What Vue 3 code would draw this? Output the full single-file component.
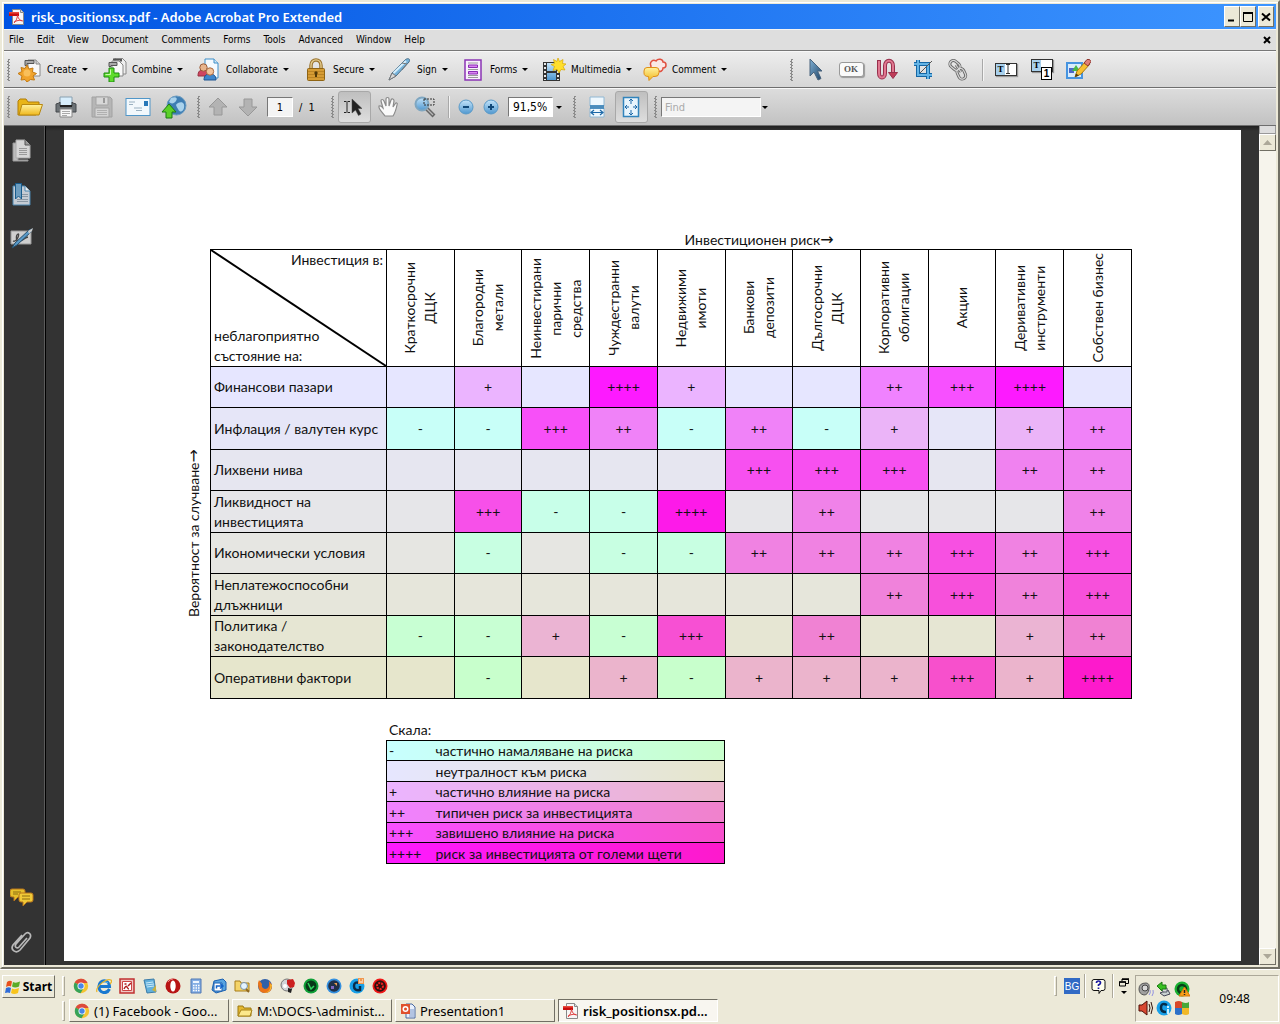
<script setup>
const menus = ['File', 'Edit', 'View', 'Document', 'Comments', 'Forms', 'Tools', 'Advanced', 'Window', 'Help']

const tasks = [
  { icon: 'create', label: 'Create' },
  { icon: 'combine', label: 'Combine' },
  { icon: 'collaborate', label: 'Collaborate' },
  { icon: 'secure', label: 'Secure' },
  { icon: 'sign', label: 'Sign' },
  { icon: 'forms', label: 'Forms' },
  { icon: 'multimedia', label: 'Multimedia' },
  { icon: 'comment', label: 'Comment' }
]

const editTools = [
  ['select', 'Select object'], ['ok', 'Button tool'], ['article', 'Article'], ['crop', 'Crop'], ['link', 'Link']
]
const textTools = [['touchup', 'Text field'], ['order', 'Reading order'], ['object', 'Edit object']]
const fileTools = [['open', 'Open'], ['print', 'Print'], ['save', 'Save'], ['mail', 'E-mail'], ['upload', 'Upload']]

const columns = [
  ['Краткосрочни', 'ДЦК'],
  ['Благородни', 'метали'],
  ['Неинвестирани', 'парични', 'средства'],
  ['Чуждестранни', 'валути'],
  ['Недвижими', 'имоти'],
  ['Банкови', 'депозити'],
  ['Дългосрочни', 'ДЦК'],
  ['Корпоративни', 'облигации'],
  ['Акции'],
  ['Деривативни', 'инструменти'],
  ['Собствен бизнес']
]

const N = '-'
const rows = [
  { label: ['Финансови пазари'], cells: [0, 1, 0, 4, 1, 0, 0, 2, 3, 4, 0] },
  { label: ['Инфлация / валутен курс'], cells: [N, N, 3, 2, N, 2, N, 1, 0, 1, 2] },
  { label: ['Лихвени нива'], cells: [0, 0, 0, 0, 0, 3, 3, 3, 0, 2, 2] },
  { label: ['Ликвидност на', 'инвестицията'], cells: [0, 3, N, N, 4, 0, 2, 0, 0, 0, 2] },
  { label: ['Икономически условия'], cells: [0, N, 0, N, N, 2, 2, 2, 3, 2, 3] },
  { label: ['Неплатежоспособни', 'длъжници'], cells: [0, 0, 0, 0, 0, 0, 0, 2, 3, 2, 3] },
  { label: ['Политика /', 'законодателство'], cells: [N, N, 1, N, 3, 0, 2, 0, 0, 1, 2] },
  { label: ['Оперативни фактори'], cells: [0, N, 0, 1, N, 1, 1, 1, 3, 1, 4] }
]

const base = {
  '-': [200, 255],
  0: [230, 230],
  1: [235, 180],
  2: [240, 130],
  3: [247, 80],
  4: [253, 26]
}
const shade = (level, t) => {
  const [r, g] = base[level]
  return `rgb(${r}, ${g}, ${Math.round(255 - 51 * t)})`
}
const mark = (level) => (level === N ? '-' : '+'.repeat(level))

const legend = [
  [N, 'частично намаляване на риска'],
  [0, 'неутралност към риска'],
  [1, 'частично влияние на риска'],
  [2, 'типичен риск за инвестицията'],
  [3, 'завишено влияние на риска'],
  [4, 'риск за инвестицията от големи щети']
]

const quick = ['chrome', 'ie', 'redapp', 'notepad', 'opera', 'calc', 'outlook', 'search', 'firefox', 'disc', 'green', 'camera', 'swirl', 'gear']
const windows = [
  { icon: 'chrome', label: '(1) Facebook - Goo...' },
  { icon: 'folder', label: 'M:\\DOCS-\\administ...' },
  { icon: 'ppt', label: 'Presentation1' },
  { icon: 'pdf', label: 'risk_positionsx.pd...', active: true }
]
const tray = ['volume', 'usb', 'shield', 'speaker', 'info', 'pinwheel']
</script>

<template>
  <svg class="sprite" aria-hidden="true">
    <defs>
      <linearGradient id="gGold" x1="0" y1="0" x2="0" y2="1"><stop offset="0" stop-color="#fff2a0" /><stop offset="1" stop-color="#f0b81c" /></linearGradient>
      <linearGradient id="gBlue" x1="0" y1="0" x2="0" y2="1"><stop offset="0" stop-color="#c4e4fa" /><stop offset="1" stop-color="#4f97cf" /></linearGradient>
      <linearGradient id="gSteel" x1="0" y1="0" x2="1" y2="1"><stop offset="0" stop-color="#7fb0d4" /><stop offset="1" stop-color="#1f4468" /></linearGradient>
    </defs>

    <symbol id="pdf" viewBox="0 0 16 16">
      <path d="M3.500.500h8l3 3v12h-11z" fill="#f6f6f6" stroke="#888" /><path d="M11.500.500v3h3" fill="#ddd" stroke="#888" />
      <path d="M0 3h10v4H0z" fill="#c90d0d" /><path d="M0 3h10v1.500H0z" fill="#e84a3c" />
      <path d="M5 14c2-2 3-4 3.500-7.500C9.500 10 11 12 14 12M5 13c3-1.500 5-2 8-1.500" fill="none" stroke="#e04040" />
    </symbol>
    <symbol id="create" viewBox="0 0 24 24">
      <path d="M10 2h8l4 4v12H10z" fill="#f8f8f8" stroke="#888" /><path d="M18 2v4h4" fill="#d4d4d4" stroke="#888" />
      <path d="M7 2.500h9v3H9v2H7z" fill="#aaa" stroke="#555" />
      <path d="M9 7l2 4 4-1-.500 4 4 1.500-3.500 2.500 1.500 4-4-.500L9 24l-2-2.500-4 .500 1-4-4-2.500 4-2-1-4 4 1z" fill="#f0a32c" stroke="#c47a12" />
      <circle cx="9" cy="15" r="3.500" fill="#ffd27a" opacity=".6" />
    </symbol>
    <symbol id="combine" viewBox="0 0 24 24">
      <path d="M12 0h7l4 4v12H12z" fill="#eee" stroke="#888" /><path d="M9 3h7l4 4v11H9z" fill="#f8f8f8" stroke="#888" /><path d="M6 4.500h8v3H8v1H6z" fill="#aaa" stroke="#555" /><path d="M10 1.500h8v2" fill="none" stroke="#555" stroke-width="2" />
      <path d="M6 10h5v5h5v4h-5v5H6v-5H1v-4h5z" fill="#5fdc2c" stroke="#1d8a10" />
      <path d="M7.500 11.500v5H2.500" fill="none" stroke="#c9f8b0" />
    </symbol>
    <symbol id="collaborate" viewBox="0 0 24 24">
      <path d="M8 1h9l4 4v15H8z" fill="#f4faff" stroke="#3c8ec8" /><path d="M17 1v4h4" fill="#cfe6f6" stroke="#3c8ec8" />
      <path d="M1 18c0-5 2-6 5-6s5 1 5 6z" fill="#cf4560" stroke="#963040" /><circle cx="6.500" cy="9.500" r="3.700" fill="#e8b48c" stroke="#9a5c3a" />
      <path d="M7 22c0-5 3-6 6-6s6 1 6 6z" fill="#3e86cc" stroke="#1f5590" /><circle cx="13" cy="13.500" r="3.700" fill="#f2c49c" stroke="#a86840" />
    </symbol>
    <symbol id="secure" viewBox="0 0 24 24">
      <path d="M7 12V7.500C7 0 17 0 17 7.500V12" fill="none" stroke="#9a7430" stroke-width="3.500" /><path d="M7 12V7.500C7 0 17 0 17 7.500V12" fill="none" stroke="#e8cf90" stroke-width="1.300" />
      <rect x="3.500" y="10.500" width="17" height="12" rx="1" fill="#d69c34" stroke="#8f6414" /><path d="M4 13.500h16M4 16.500h16M4 19.500h16" stroke="#bb8424" />
      <circle cx="12" cy="15" r="1.700" fill="#503808" /><path d="M12 15v4" stroke="#503808" stroke-width="2" />
    </symbol>
    <symbol id="sign" viewBox="0 0 24 24">
      <path d="M1 22l3-7L17 2c2-2 6-2 4 2L8 18z" fill="#77b3da" stroke="#4b6f88" /><path d="M1 22l3-7 4 3z" fill="#d8d8d8" stroke="#777" /><path d="M5.500 15L18 3" stroke="#d6eefb" stroke-width="2" /><path d="M14 5l5 1-5 6" fill="none" stroke="#777" />
    </symbol>
    <symbol id="forms" viewBox="0 0 24 24">
      <rect x="4" y="2" width="16" height="20" fill="#f8f0fc" stroke="#8a35b4" stroke-width="1.500" />
      <path d="M7 5h10M7 11.500h10M7 17.500h10M7 19.500h10" stroke="#9a9a9a" /><path d="M7.500 7h9v2.500h-9zM7.500 13.500h9V16h-9z" fill="#d884f0" stroke="#8a2ab4" />
    </symbol>
    <symbol id="multimedia" viewBox="0 0 24 24">
      <rect x="1" y="4" width="17" height="19" fill="#333" /><path d="M5 5h9v8H5zM5 15h9v7H5z" fill="url(#gBlue)" />
      <path d="M3 5v17M16 5v17" stroke="#e8e8e8" stroke-width="2" stroke-dasharray="2 2" />
      <path d="M16 0l1.500 3.500L21 1.500l-.500 4 3.500.500-3 2.500 2 3.500-4-.500L17 15l-2-3.500-4 1 1.500-4L9 6.500l3.500-1-1-4 3.500 2z" fill="#ffdf2c" stroke="#d8a800" stroke-width=".7" />
    </symbol>
    <symbol id="comment" viewBox="0 0 24 24">
      <path d="M8 8c-2-4 2-7 5-5 2-3 7-2 7 1 4 0 4 6 0 6 0 3-3 4-4 3l-2 4-2-5c-3 1-5-1-4-4z" fill="#fae8e6" stroke="#e05040" stroke-width="1.500" />
      <path d="M4 9.500h9q3 0 3 3v2q0 4-4 4h-2l-4 4-.500-4Q1 18.500 1 15v-2q0-3.500 3-3.500z" fill="url(#gGold)" stroke="#e09018" />
    </symbol>
    <symbol id="select" viewBox="0 0 24 24"><path d="M7 1v17l4-4 4 8 3-1.500-3.500-7.500H19z" fill="url(#gSteel)" stroke="#49637c" /></symbol>
    <symbol id="article" viewBox="0 0 24 24">
      <path d="M4 2v13c0 6 6 6 6 0V8c0-7 8-7 8 0v6" fill="none" stroke="#98304c" stroke-width="4" /><path d="M4 3v12c0 6 6 6 6 0V8c0-7 8-7 8 0v6" fill="none" stroke="#e07890" stroke-width="2" />
      <path d="M13.500 14.500h9L18 20.500z" fill="#c03c58" stroke="#98304c" />
    </symbol>
    <symbol id="crop" viewBox="0 0 24 24">
      <path d="M7 2v15h14M3 6h14v15" fill="none" stroke="#1667a4" stroke-width="4" /><path d="M7 2v15h14M3 6h14v15" fill="none" stroke="#64b4e6" stroke-width="2" /><path d="M9 15L21 3" stroke="#555" />
    </symbol>
    <symbol id="link" viewBox="0 0 24 24">
      <g fill="none" stroke="#686868" stroke-width="3"><rect x="5" y="2" width="7" height="11" rx="3.500" transform="rotate(-50 8 8)" /><rect x="11" y="10" width="7" height="11" rx="3.500" transform="rotate(-25 15 16)" /><path d="M9 7l5 7" /></g>
      <g fill="none" stroke="#d8d8d8" stroke-width="1.200"><rect x="5" y="2" width="7" height="11" rx="3.500" transform="rotate(-50 8 8)" /><rect x="11" y="10" width="7" height="11" rx="3.500" transform="rotate(-25 15 16)" /><path d="M9 7l5 7" /></g>
    </symbol>
    <symbol id="object" viewBox="0 0 26 24">
      <path d="M2 5h15v15H2z" fill="#d8ecfc" stroke="#4694e0" stroke-width="2" /><path d="M4 10h5v5H4z" fill="#4c68c8" /><path d="M7 13l4-6 4 6z" fill="#48b848" />
      <path d="M10 19l2-6L21 3l4 3-9 10z" fill="#f8c030" stroke="#a87810" /><path d="M19 5l3-3.500q3-1 4 2L23 8z" fill="#e08078" stroke="#903830" /><path d="M10 19l1-3.500 3 2z" fill="#543c10" />
    </symbol>
    <symbol id="open" viewBox="0 0 26 24">
      <path d="M1 20V6l2-2h6l2 3h11v3l-3 10z" fill="#e8b418" stroke="#b07c08" /><path d="M2 20L5 9.500h20.500L22 20z" fill="url(#gGold)" stroke="#b88810" />
    </symbol>
    <symbol id="print" viewBox="0 0 24 24">
      <path d="M6 2h12v9H6z" fill="#d8eefc" stroke="#89a0b0" /><path d="M2 9q4-1 4-2v4h12V7q0 1 4 2v8H2z" fill="#6c7276" stroke="#44484c" /><path d="M6 11h12" stroke="#222" stroke-width="2" />
      <path d="M6 14h12v8H6z" fill="#f8f8f8" stroke="#888" /><path d="M8 16.500h8M8 18.500h8M8 20.500h5" stroke="#aaa" />
    </symbol>
    <symbol id="save" viewBox="0 0 24 24">
      <path d="M2 2h18l2 2v18H2z" fill="#b6b6b6" stroke="#a2a2a2" /><path d="M6 2h12v8H6z" fill="#d8d8d8" stroke="#a4a4a4" /><path d="M14 3v5" stroke="#999" stroke-width="2" /><path d="M5 13h14v9H5z" fill="#d4d4d4" stroke="#a4a4a4" /><path d="M7 15.500h10M7 17.500h10M7 19.500h10" stroke="#b0b0b0" />
    </symbol>
    <symbol id="mail" viewBox="0 0 26 24">
      <rect x="1" y="3.500" width="24" height="17" fill="#f2f8fc" stroke="#5096c8" /><path d="M19 6h4v5h-4z" fill="#2878b8" /><path d="M4 7h6M4 9.500h4M9 13h8M11 15.500h6" stroke="#9ab0c0" />
    </symbol>
    <symbol id="upload" viewBox="0 0 26 24">
      <circle cx="15.500" cy="10.500" r="9.500" fill="#3f7eb4" stroke="#6c9cc0" /><path d="M10 3c5-2 7 0 5 3s-5 3-7 1zM17 8c5-2 7 1 6 5s-4 5-6 1-3-4 0-6z" fill="#a9d2ec" />
      <path d="M8 9l7 8h-4v6H5v-6H1z" fill="#5cd028" stroke="#1b7c10" />
    </symbol>
    <symbol id="up" viewBox="0 0 20 20"><path d="M10 1l9 9h-5v8H6v-8H1z" fill="#b3b3b3" stroke="#989898" /></symbol>
    <symbol id="down" viewBox="0 0 20 20"><path d="M10 19l9-9h-5V2H6v8H1z" fill="#b3b3b3" stroke="#989898" /></symbol>
    <symbol id="textsel" viewBox="0 0 24 24"><path d="M2 6.500h2.500M5.500 6.500H8M5 7v10M2 17.500h2.500M5.500 17.500H8" stroke="#222" stroke-width="1" /><path d="M10 4v14l3.500-3 3 5.500 2.500-1.500-3-5.500h4z" fill="#222" stroke="#444" stroke-width=".5" /></symbol>
    <symbol id="hand" viewBox="0 0 24 24"><path d="M8 21C6 18 1 14 2 11c2-1 3 1 4 2L4 6c0-2 2-2 3 0l2 5V4c0-2 3-2 3 0v7l2-6c1-2 3-1 3 1l-1 6 2-3c1-2 3-1 2 1-1 5-2 8-4 11z" fill="#fafafa" stroke="#8a8a8a" stroke-width="1.200" /></symbol>
    <symbol id="loupe" viewBox="0 0 24 24"><path d="M13 13l8 8" stroke="#666" stroke-width="4" /><path d="M14 14l6 6" stroke="#b8b8b8" stroke-width="1.200" /><circle cx="9" cy="9" r="6.500" fill="url(#gBlue)" stroke="#7fa6c0" stroke-width="2" /><path d="M11 4h10v6H11z" fill="none" stroke="#333" stroke-dasharray="2 1" /></symbol>
    <symbol id="minus" viewBox="0 0 16 16"><circle cx="8" cy="8" r="7" fill="url(#gBlue)" stroke="#5a9ac8" /><path d="M5 8h6" stroke="#104878" stroke-width="2" /></symbol>
    <symbol id="plus" viewBox="0 0 16 16"><circle cx="8" cy="8" r="7" fill="url(#gBlue)" stroke="#5a9ac8" /><path d="M5 8h6M8 5v6" stroke="#104878" stroke-width="2" /></symbol>
    <symbol id="fitw" viewBox="0 0 20 24"><path d="M3 2h14v9H3zM3 13h14v9H3z" fill="#eef7fd" stroke="#90b8d4" /><path d="M3 11h14M3 13h14" stroke="#2b7ab4" stroke-width="1.500" /><path d="M4 17.500h12M7 15l-3 2.500L7 20M13 15l3 2.500-3 2.500" fill="none" stroke="#1c68a8" stroke-width="1.200" /></symbol>
    <symbol id="fitp" viewBox="0 0 20 24"><path d="M2.500 2.500h15v19h-15z" fill="#e8f4fc" stroke="#3284bc" stroke-width="1.500" /><path d="M10 4v5M10 15v5M4 12h4M12 12h4M8 6l2-2 2 2M8 18l2 2 2-2M6 10l-2 2 2 2M14 10l2 2-2 2" fill="none" stroke="#1c68a8" /></symbol>
    <symbol id="pages" viewBox="0 0 24 24"><path d="M3 4h5v17h10v1H3z" fill="#bbb" stroke="#999" /><path d="M6 1h9l5 5v13H6z" fill="#d6d6d6" stroke="#aaa" /><path d="M15 1v5h5" fill="#999" stroke="#555" /><path d="M9 9.500h8M9 11.500h8M9 13.500h8M9 15.500h8" stroke="#999" /></symbol>
    <symbol id="bookmarks" viewBox="0 0 24 24"><path d="M3 3h12l5 5v14H3z" fill="#c5ccd4" stroke="#4a86b0" /><path d="M15 3v5h5" fill="#eee" stroke="#4a86b0" /><path d="M12 11.500h6M12 13.500h6M7 16.500h11M7 18.500h11" stroke="#8a98a4" /><path d="M5.500.500h6V16l-3-3-3 3z" fill="#6d9dbf" stroke="#185c8c" /></symbol>
    <symbol id="signatures" viewBox="0 0 24 24"><path d="M1 4h20v13H1z" fill="#cfcfcf" stroke="#999" /><path d="M3 14c4 2 7-8 5-7s-3 8 2 7 3-3 8-4" fill="none" stroke="#444" stroke-width="1.300" /><path d="M2 21l3-5L19 3l3-1-1 3L7 18z" fill="#5a9ac8" stroke="#26506e" /><path d="M18 4l5-3-1 3-3 3z" fill="#ccc" /></symbol>
    <symbol id="comments" viewBox="0 0 24 24"><path d="M2 2h11q2 0 2 2v4q0 2-2 2H8l-4 4v-4H2q-2 0-2-2V4q0-2 2-2z" fill="#e6c02c" stroke="#b8741a" /><path d="M3 5h8M3 7h5" stroke="#8c6c10" /><path d="M11 6h10q2 0 2 2v5q0 2-2 2h-4l-4 4v-4h-2q-2 0-2-2V8q0-2 2-2z" fill="#f0ca38" stroke="#b8741a" /><path d="M12 9h8M12 12h8" stroke="#8c6c10" /></symbol>
    <symbol id="clip" viewBox="0 0 24 24"><path d="M17 7l-8 9c-2 2-5 0-3-3l9-10c3-3 7 0 5 4L10 19c-4 4-10 0-7-5L12 4" fill="none" stroke="#b8b8b8" stroke-width="1.700" /></symbol>

    <symbol id="flag" viewBox="0 0 16 16"><path d="M2 3q3-2 5-.500L6 7.500Q4 6.500 1 8z" fill="#e8501c" /><path d="M8 3q3 1.500 7-.500L14 7.500q-4 2-7 0z" fill="#5cac28" /><path d="M1 9q3-1.500 5 0l-1 5Q3 13 0 14z" fill="#2f6cd8" /><path d="M7 9.500q3 1.500 7-.500l-1 5q-4 2-7 0z" fill="#f8c41c" /></symbol>
    <symbol id="chrome" viewBox="0 0 16 16"><circle cx="8" cy="8" r="7.200" fill="#f4c430" /><path d="M8 8L1.700 4.500A7.200 7.200 0 0 1 14.600 5H8z" fill="#dd4a3c" /><path d="M8 8L1.700 4.500A7.200 7.200 0 0 0 7.500 15.200L11 9.500z" fill="#36a35a" /><circle cx="8" cy="8" r="3.500" fill="#fff" /><circle cx="8" cy="8" r="2.700" fill="#4786e8" /></symbol>
    <symbol id="ie" viewBox="0 0 16 16"><path d="M13.500 11c-3 6-11 4-10.500-3s10-7 10.500.500H4" fill="none" stroke="#1878d0" stroke-width="3" /><path d="M5 6q3-4 7-1" fill="none" stroke="#60c0f8" /><path d="M1 14C-1 9 10 0 15 2c1 1 0 3-1 4" fill="none" stroke="#e8b428" stroke-width="1.200" /></symbol>
    <symbol id="redapp" viewBox="0 0 16 16"><path d="M1 1h14v14H1z" fill="#f0c8c4" stroke="#c03030" stroke-width="1.500" /><path d="M3.500 3.500h9v9h-9z" fill="#fff" stroke="#c44" /><path d="M5 11q2-4 3-2t2 2M5.500 6h2M9 8l3-3" stroke="#b02020" stroke-width="1.500" fill="none" /></symbol>
    <symbol id="notepad" viewBox="0 0 16 16"><path d="M2 2l10-1 2 13-9 1z" fill="#62b0dc" stroke="#3c7ca8" /><path d="M4 5l7-1M4 7l8-1M5 9l7-1" stroke="#c8e8f8" /><path d="M10 12l4-5v7z" fill="#c8b040" /></symbol>
    <symbol id="opera" viewBox="0 0 16 16"><circle cx="8" cy="8" r="7.500" fill="#b81414" /><ellipse cx="8" cy="8" rx="2.700" ry="5.500" fill="#fff" /><path d="M3 4q2-3 5-3" stroke="#f08080" fill="none" /></symbol>
    <symbol id="calc" viewBox="0 0 16 16"><path d="M3 1h10v14H3z" fill="#84aee4" stroke="#5078b4" /><path d="M5 3h6v2H5z" fill="#eef6ff" /><path d="M5 7.500h7M5 10h7M5 12.500h7" stroke="#fff" stroke-width="1.500" stroke-dasharray="1.500 1" /></symbol>
    <symbol id="outlook" viewBox="0 0 16 16"><path d="M3 3l9-2 3 3v8l-10 3-4-3z" fill="#58a4e0" stroke="#1c60b0" /><path d="M3 5h8v8H3z" fill="#fff" stroke="#1c60b0" /><path d="M5.500 10.500V8H11M9 5.500L12 8l-3 2.500" fill="none" stroke="#1464c8" stroke-width="1.500" /></symbol>
    <symbol id="search" viewBox="0 0 16 16"><path d="M1 13V3h5l1 2h8v8z" fill="#f4d468" stroke="#a87c18" /><circle cx="10" cy="8" r="3.500" fill="#e4f4ff" stroke="#7890a8" /><path d="M12 11l3 3" stroke="#906820" stroke-width="2" /></symbol>
    <symbol id="folder" viewBox="0 0 16 16"><path d="M1 13V3h5l1 2h7v8z" fill="#e4b830" stroke="#9c7810" /><path d="M1 13l3-6h11l-2 6z" fill="#fce98c" stroke="#a88418" /></symbol>
    <symbol id="firefox" viewBox="0 0 16 16"><circle cx="8" cy="8" r="7" fill="#3060a8" /><path d="M1 5q0 10 7 10t7-8l-3-4q1 8-4 8-4-1-3-5L2 2z" fill="#ec7418" /><path d="M15 7q-1 8-8 8 8-2 6-9z" fill="#f8c030" /></symbol>
    <symbol id="disc" viewBox="0 0 16 16"><circle cx="7" cy="7" r="6" fill="#d0d4d8" stroke="#777" /><path d="M7 2l6-1 2 4-1 4-4 1-3-4z" fill="#cc2020" /><path d="M8 10l4 1-1 4-3-1z" fill="#222" /><circle cx="5" cy="8" r="2" fill="#fff" /></symbol>
    <symbol id="green" viewBox="0 0 16 16"><circle cx="8" cy="8" r="7.500" fill="#10a038" /><circle cx="8" cy="8" r="5.500" fill="#083818" /><path d="M5 5l3 6 3-3" fill="none" stroke="#30d860" stroke-width="1.500" /></symbol>
    <symbol id="camera" viewBox="0 0 16 16"><circle cx="8" cy="8" r="7.500" fill="#3490e0" /><circle cx="8" cy="8" r="5.800" fill="#203048" /><path d="M8 5h3v3z" fill="#f0a050" /><path d="M5 8h3v3H5z" fill="#8068c0" /></symbol>
    <symbol id="swirl" viewBox="0 0 16 16"><circle cx="8" cy="8" r="7.500" fill="#18a0e8" /><path d="M11 5q-6-2-6 3t6 4V8" fill="none" stroke="#0b2c48" stroke-width="2.500" /><path d="M9 0h6v6H9z" fill="#f09850" /><path d="M10 2h1M13 2h1M10 4h4" stroke="#fff" /></symbol>
    <symbol id="gear" viewBox="0 0 16 16"><circle cx="8" cy="8" r="7.500" fill="#f01818" /><circle cx="8" cy="8" r="5.800" fill="#301010" /><circle cx="8" cy="8" r="3" fill="none" stroke="#f02020" stroke-width="2" stroke-dasharray="2 1" /></symbol>
    <symbol id="ppt" viewBox="0 0 16 16"><path d="M6 1h6l3 3v11H6z" fill="#e8f0fc" stroke="#4868a0" /><path d="M9 7h5M9 9h5M9 11h5M9 13h5" stroke="#7c98c8" /><path d="M1 1h9v10H1z" fill="#e0502c" /><circle cx="5.500" cy="6" r="3" fill="#fff" /><circle cx="5.500" cy="6" r="1.500" fill="#e0502c" /></symbol>
    <symbol id="help" viewBox="0 0 16 16"><path d="M3 1.500h9q2 0 2 2v7q0 2-2 2h-2l-2 3v-3H3q-2 0-2-2v-7q0-2 2-2z" fill="#fffff0" stroke="#111" /><path d="M5.500 5q0-2 2-2t2 2q0 1-2 2v1M7.500 9.500V11" fill="none" stroke="#1818a0" stroke-width="1.700" /></symbol>
    <symbol id="restore" viewBox="0 0 10 9"><path d="M3 1.500h6.500v4H7M3 1v2M.500 4h6v4h-6z" fill="none" stroke="#000" /><path d="M3 1h7M0 4h7" stroke="#000" stroke-width="1.500" /></symbol>
    <symbol id="volume" viewBox="0 0 16 16"><path d="M1 8q0-6 7-6 4 0 3 6t-5 6Q1 13 1 8z" fill="#a0a0a0" stroke="#555" /><circle cx="7" cy="7" r="3" fill="#d8d8d8" stroke="#444" /><path d="M11 14q2-2 1-5M14 15q2-3 1-6" fill="none" stroke="#9090e0" /></symbol>
    <symbol id="usb" viewBox="0 0 16 16"><path d="M4 12l8-3 2 4-6 2z" fill="#c8d0d0" stroke="#445" /><path d="M5 7h6v4H7z" fill="#d8dcdc" stroke="#556" /><path d="M1 5l5-4v3h4v4H6v2z" fill="#38c020" stroke="#187810" /></symbol>
    <symbol id="shield" viewBox="0 0 16 16"><circle cx="8" cy="8" r="7.500" fill="#18b030" /><circle cx="8" cy="8" r="4" fill="none" stroke="#084018" stroke-width="2.500" /><path d="M10.500 6L16 15H5z" fill="#f8a018" stroke="#d87808" /><path d="M10.500 9v3M10.500 13v1" stroke="#222" stroke-width="1.500" /></symbol>
    <symbol id="speaker" viewBox="0 0 16 16"><path d="M1 5h3l5-4v14l-5-4H1z" fill="#d84830" stroke="#501008" /><path d="M11 4q2 4 0 8M13 2q3 6 0 12" fill="none" stroke="#301008" /></symbol>
    <symbol id="info" viewBox="0 0 16 16"><circle cx="8" cy="8" r="7.500" fill="#18a0e8" /><path d="M11 5q-6-3-6 3 0 4 5 4" fill="none" stroke="#062c48" stroke-width="2.500" /><path d="M12 9v5M12 6v2" stroke="#c8f0ff" stroke-width="2" /></symbol>
    <symbol id="pinwheel" viewBox="0 0 16 16"><path d="M1 2q4-2 7 0v6H1z" fill="#d84828" /><path d="M8 2q4 2 7 0v6H8z" fill="#48a838" /><path d="M1 8h7v6q-4 2-7 0z" fill="#2c70c8" /><path d="M8 8h7v6q-3 2-7 0z" fill="#f0b828" /></symbol>
  </svg>

  <div class="desktop">
    <div class="window">
      <header class="title">
        <svg class="i16"><use href="#pdf" /></svg>
        <h1>risk_positionsx.pdf - Adobe Acrobat Pro Extended</h1>
        <div class="winbtns">
          <button aria-label="Minimize"><svg viewBox="0 0 12 12"><path d="M2 9.500h6" stroke="#000" stroke-width="2" /></svg></button>
          <button aria-label="Maximize"><svg viewBox="0 0 12 12"><path d="M1.500 2v8.500h9V2" fill="none" stroke="#000" /><path d="M1 2h10" stroke="#000" stroke-width="2" /></svg></button>
          <button class="close" aria-label="Close"><svg viewBox="0 0 12 12"><path d="M2 2.500l8 7M10 2.500l-8 7" stroke="#000" stroke-width="2" /></svg></button>
        </div>
      </header>

      <nav class="menubar">
        <button v-for="m in menus" :key="m">{{ m }}</button>
        <button class="docclose" aria-label="Close document"><svg viewBox="0 0 8 8"><path d="M1 1l6 6M7 1L1 7" stroke="#000" stroke-width="2" /></svg></button>
      </nav>

      <div class="toolbar tasks">
        <i class="grip"></i>
        <div class="taskgrid">
          <button v-for="t in tasks" :key="t.icon"><svg class="i24"><use :href="'#' + t.icon" /></svg><span>{{ t.label }}</span><i class="caret"></i></button>
        </div>
        <i class="grip far"></i>
        <button v-for="[icon, name] in editTools" :key="icon" class="tool" :aria-label="name">
          <span v-if="icon === 'ok'" class="okbtn">OK</span>
          <svg v-else class="i24"><use :href="'#' + icon" /></svg>
        </button>
        <i class="sep"></i>
        <button v-for="[icon, name] in textTools" :key="icon" class="tool" :aria-label="name">
          <span v-if="icon === 'touchup'" class="tbox"><b>T</b><svg viewBox="0 0 6 10"><path d="M1 .500h4M3 .500v9M1 9.500h4" stroke="#333" fill="none" /></svg></span>
          <span v-else-if="icon === 'order'" class="tbox order"><b>T</b><em>1</em></span>
          <svg v-else class="i26"><use href="#object" /></svg>
        </button>
      </div>

      <div class="toolbar files">
        <i class="grip first"></i>
        <button v-for="[icon, name] in fileTools" :key="icon" class="tool" :aria-label="name"><svg class="i26"><use :href="'#' + icon" /></svg></button>
        <i class="grip mid"></i>
        <button class="nav" aria-label="Previous page"><svg class="i20"><use href="#up" /></svg></button>
        <button class="nav" aria-label="Next page"><svg class="i20"><use href="#down" /></svg></button>
        <label class="page"><input value="1" aria-label="Page" /><span>/&nbsp; 1</span></label>
        <i class="grip after"></i>
        <button class="tool on" aria-label="Select text"><svg class="i24"><use href="#textsel" /></svg></button>
        <button class="tool" aria-label="Hand"><svg class="i24"><use href="#hand" /></svg></button>
        <button class="tool" aria-label="Marquee zoom"><svg class="i24"><use href="#loupe" /></svg></button>
        <i class="sep"></i>
        <button class="zoomb" aria-label="Zoom out"><svg class="i16"><use href="#minus" /></svg></button>
        <button class="zoomb" aria-label="Zoom in"><svg class="i16"><use href="#plus" /></svg></button>
        <input class="zoomin" value="91,5%" aria-label="Zoom level" />
        <i class="caret"></i>
        <i class="grip wide"></i>
        <button class="tool" aria-label="Fit width"><svg class="i24"><use href="#fitw" /></svg></button>
        <button class="tool on" aria-label="Fit page"><svg class="i24"><use href="#fitp" /></svg></button>
        <i class="grip tight"></i>
        <input class="find" placeholder="Find" aria-label="Find" />
        <i class="caret"></i>
      </div>

      <div class="body">
        <aside class="side">
          <button aria-label="Pages"><svg class="i24"><use href="#pages" /></svg></button>
          <button aria-label="Bookmarks"><svg class="i24"><use href="#bookmarks" /></svg></button>
          <button aria-label="Signatures"><svg class="i24"><use href="#signatures" /></svg></button>
          <button class="low" aria-label="Comments"><svg class="i24"><use href="#comments" /></svg></button>
          <button aria-label="Attachments"><svg class="i24"><use href="#clip" /></svg></button>
        </aside>

        <main class="canvas">
          <article class="sheet">
            <p class="xaxis">Инвестиционен риск<span class="arrow">→</span></p>
            <div class="matrix">
              <p class="yaxis"><span>Вероятност за случване<span class="arrow">→</span></span></p>
              <div class="grow">
                <table class="risk">
                  <thead>
                    <tr>
                      <td class="corner">
                        <div>
                          <svg viewBox="0 0 100 100" preserveAspectRatio="none"><path d="M0 0L100 100" stroke="#000" stroke-width="2" vector-effect="non-scaling-stroke" /></svg>
                          <span class="right">Инвестиция в:</span>
                          <span>неблагоприятно<br />състояние на:</span>
                        </div>
                      </td>
                      <th v-for="(c, i) in columns" :key="i" scope="col"><div><template v-for="(l, j) in c" :key="j"><br v-if="j" />{{ l }}</template></div></th>
                    </tr>
                  </thead>
                  <tbody>
                    <tr v-for="(r, i) in rows" :key="i">
                      <th scope="row" :style="{ background: shade(0, i / 7) }"><template v-for="(l, j) in r.label" :key="j"><br v-if="j" />{{ l }}</template></th>
                      <td v-for="(c, j) in r.cells" :key="j" :style="{ background: shade(c, i / 7) }">{{ mark(c) }}</td>
                    </tr>
                  </tbody>
                </table>
              </div>
            </div>

            <section class="scale">
              <p>Скала:</p>
              <table>
                <tbody>
                  <tr v-for="[lv, text] in legend" :key="text" :style="{ background: `linear-gradient(to right, ${shade(lv, 0)}, ${shade(lv, 1)})` }">
                    <td class="sym">{{ mark(lv) }}</td>
                    <td>{{ text }}</td>
                  </tr>
                </tbody>
              </table>
            </section>
          </article>
        </main>

        <div class="scroll">
          <i class="split"></i>
          <button aria-label="Scroll up"><svg viewBox="0 0 9 5"><path d="M4.500 0L9 5H0z" fill="#aca899" /></svg></button>
          <i class="track"></i>
          <button aria-label="Scroll down"><svg viewBox="0 0 9 5"><path d="M4.500 5L9 0H0z" fill="#aca899" /></svg></button>
        </div>
      </div>
    </div>

    <footer class="taskbar">
      <button class="start"><svg class="i16"><use href="#flag" /></svg>Start</button>
      <div class="bands">
        <div class="band">
          <i class="bar"></i>
          <a v-for="q in quick" :key="q" href="#" :aria-label="q"><svg class="i16"><use :href="'#' + q" /></svg></a>
        </div>
        <div class="band">
          <i class="bar"></i>
          <button v-for="w in windows" :key="w.label" class="win" :class="{ active: w.active }"><svg class="i16"><use :href="'#' + w.icon" /></svg>{{ w.label }}</button>
        </div>
      </div>
      <div class="lang">
        <i class="bar"></i>
        <button class="bg">BG</button>
        <i class="line"></i>
        <button aria-label="Help"><svg class="i16"><use href="#help" /></svg></button>
        <i class="line"></i>
        <button class="opts" aria-label="Restore"><svg><use href="#restore" /></svg><i class="caret"></i></button>
      </div>
      <div class="tray">
        <div class="trayicons"><svg v-for="t in tray" :key="t" class="i16"><use :href="'#' + t" /></svg></div>
        <time>09:48</time>
      </div>
    </footer>
  </div>
</template>

<style>
html, body { margin: 0; background: #ece9d8; }
</style>

<style scoped>
* { box-sizing: border-box; }
button { border: 0; padding: 0; background: none; font: inherit; color: inherit; display: flex; align-items: center; justify-content: center; }
p, h1 { margin: 0; font-weight: normal; }
svg { display: block; flex: none; overflow: visible; }
.sprite { position: absolute; width: 0; height: 0; overflow: hidden; }
.i16 { width: 16px; height: 16px; }
.i20 { width: 20px; height: 20px; }
.i24 { width: 24px; height: 24px; }
.i26 { width: 26px; height: 24px; }

.desktop { min-height: 100vh; display: flex; flex-direction: column; font: 10px "DejaVu Sans Condensed", "DejaVu Sans", sans-serif; color: #000; }
.window { flex: 1; display: flex; flex-direction: column; padding: 2px; border: 2px solid #ece9d8; border-right: 2px solid #716f64; border-bottom: 2px solid #716f64; background: #ece9d8; box-shadow: inset 1px 1px #fff; }

.title { height: 25px; display: flex; align-items: center; padding: 0 2px 0 5px; gap: 6px; background: linear-gradient(to right, #0054e3, #3d95ff); color: #fff; }
.title h1 { flex: 1; font: 600 13px "Noto Sans", sans-serif; }
.winbtns { display: flex; }
.winbtns button { width: 16px; height: 21px; background: #ece9d8; border: 1px solid; border-color: #fff #716f64 #716f64 #fff; }
.winbtns svg { width: 12px; height: 12px; }
.winbtns .close { margin-left: 2px; }

.menubar { height: 22px; display: flex; align-items: center; gap: 13px; padding: 0 5px 1px; background: #dedede; border-top: 1px solid #f4f4f4; border-bottom: 1px solid #777; }
.docclose { margin-left: auto; }
.docclose svg { width: 8px; height: 8px; }

.toolbar { display: flex; align-items: center; height: 37px; border-bottom: 1px solid #6e6e6e; border-top: 1px solid #f8f8f8; }
.tasks { background: linear-gradient(#ededed, #d6d6d6); }
.files { height: 38px; background: linear-gradient(#dcdcdc, #c2c2c2); }
.grip { flex: none; width: 3px; height: 22px; margin: 0 5px 0 3px; background: repeating-conic-gradient(#8c8c8c 0 25%, transparent 0 50%) 0 0 / 3px 3px; }
.grip.first { margin-right: 2px; }
.grip.far { margin: 0 4px 0 57px; }
.grip.mid { margin: 0 3px 0 5px; }
.grip.after { margin: 0 4px 0 16px; }
.grip.wide { margin: 0 3px 0 11px; }
.grip.tight { margin: 0 4px 0 6px; }
.taskgrid { display: grid; grid-template-columns: 85px 94px 107px 84px 73px 81px 101px 90px; padding-left: 3px; }
.taskgrid button { justify-content: flex-start; gap: 5px; }
.caret { flex: none; width: 0; height: 0; border: 3px solid transparent; border-top-color: #000; border-bottom: 0; }
.tool { width: 36px; height: 32px; }
.on { width: 33px; background: linear-gradient(#bfbfbf, #dedede); border: 1px solid #a8a8a8; border-radius: 3px; }
.sep { flex: none; width: 2px; height: 22px; margin: 0 4px 0 5px; background: #a8a8a8; border-right: 1px solid #f4f4f4; }
.okbtn { width: 25px; height: 15px; border: 1px solid #999; border-radius: 3px; background: #fafafa; color: #555; font: 700 9px/13px "Liberation Serif", serif; box-shadow: 1px 1px 1px #999; }
.tbox { position: relative; width: 22px; height: 13px; border: 1px solid #333; background: #fff; display: flex; box-shadow: 1px 1px 1px #999; }
.tbox b { width: 9px; background: #a8d0ec; font: 700 9px/11px "Liberation Serif", serif; }
.tbox svg { width: 6px; height: 10px; }
.tbox.order { margin-bottom: 8px; }
.tbox em { position: absolute; left: 9px; top: 7px; width: 11px; height: 13px; border: 1px solid #000; background: #fff; font: 700 10px/11px "Liberation Sans", sans-serif; }
.nav { width: 30px; }
.page { display: flex; align-items: center; gap: 6px; font-size: 11px; }
input { font: 11px "DejaVu Sans Condensed", "DejaVu Sans", sans-serif; border: 1px solid; border-color: #777 #fff #fff #777; background: #f4f4f4; height: 20px; padding: 0 4px; border-radius: 0; outline: 0; }
.page input { width: 26px; text-align: center; margin-left: 4px; }
.zoomb { width: 25px; }
.zoomin { width: 45px; margin: 0 3px 0 4px; font-size: 12px; background: #fff; }
.find { width: 100px; margin-right: 1px; padding: 0 3px; }
.find::placeholder { color: #aaa; opacity: 1; }

.body { flex: 1; display: flex; background: #333; }
.side { width: 42px; display: flex; flex-direction: column; align-items: center; gap: 20px; padding: 13px 5px 10px 0; border-right: 1px solid #000; box-shadow: inset -1px 0 #5c5c5c; }
.low { margin-top: auto; }
.side button { height: 24px; }
.canvas { flex: 1; display: flex; padding: 4px 18px; background: linear-gradient(#202020, #333 5px); }
.sheet { flex: 1; background: #fff; padding: 100px 109px 60px 121px; font: 14px/20px Lato, "Noto Sans", sans-serif; color: #111; }
.scroll { width: 17px; display: flex; flex-direction: column; background: #ece9d8; }
.scroll button { height: 17px; background: #ece9d8; border: 1px solid; border-color: #fff #716f64 #716f64 #fff; }
.scroll svg { width: 9px; height: 5px; }
.split { height: 8px; background: #dedede; border: 1px solid #999; border-top: 0; }
.track { flex: 1; background: #f6f4ec; }

.xaxis { padding-left: 201px; text-align: center; line-height: 19px; }
.arrow { font: 16px/1 "DejaVu Sans", sans-serif; }
.matrix { display: flex; }
.yaxis { width: 25px; display: flex; justify-content: flex-start; padding-top: 118px; }
.yaxis > span { writing-mode: vertical-rl; transform: rotate(180deg); text-align: center; line-height: 18px; }
.grow { flex: 1; }
table { border-collapse: collapse; }
.risk { width: 100%; table-layout: fixed; }
.risk th, .risk td { border: 1px solid #000; padding: 0; font-weight: normal; text-align: center; }
.risk thead td { width: 176px; height: 117px; }
.risk thead th div { writing-mode: vertical-rl; transform: rotate(180deg); display: inline-block; vertical-align: middle; white-space: nowrap; }
.risk .corner div { position: relative; height: 116px; padding: 0 3px; display: flex; flex-direction: column; justify-content: space-between; text-align: left; }
.risk .corner svg { position: absolute; left: 0; top: 0; width: 100%; height: 100%; }
.risk .corner span { position: relative; }
.risk .corner .right { text-align: right; }
.risk tbody th { text-align: left; padding-left: 3px; }
.risk tbody tr { height: 42px; }
.risk tbody tr:nth-child(odd) { height: 41px; }

.scale { margin: 21px 0 0 201px; }
.scale p { padding-left: 3px; }
.scale table { width: 339px; border: 1px solid #000; }
.scale tr { height: 20px; border-bottom: 1px solid #000; }
.scale tr:nth-child(even) { height: 21px; }
.scale td { padding: 0; line-height: 19px; white-space: nowrap; }
.scale .sym { width: 49px; padding-left: 2px; }

.taskbar { height: 55px; display: flex; padding: 5px 1px 2px 2px; border-top: 1px solid #fff; background: #ece9d8; font: 13px "Noto Sans", sans-serif; }
.start { width: 53px; height: 23px; gap: 2px; font-size: 12px; font-weight: 700; border: 1px solid; border-color: #fff #716f64 #716f64 #fff; }
.bands { flex: 1; padding-left: 7px; display: flex; flex-direction: column; gap: 2px; }
.band { display: flex; align-items: center; height: 23px; }
.bar { flex: none; width: 3px; height: 20px; margin-right: 4px; border: 1px solid; border-color: #fff #aca899 #aca899 #fff; }
.band a { width: 23px; display: flex; justify-content: center; }
.win { width: 160px; height: 23px; margin-right: 3px; padding: 0 4px; gap: 4px; justify-content: flex-start; white-space: nowrap; border: 1px solid; border-color: #fff #716f64 #716f64 #fff; }
.win.active { background: #f8f6f0; border-color: #716f64 #fff #fff #716f64; font-weight: 600; }
.lang { display: flex; align-items: center; height: 22px; }
.bg { width: 16px; height: 16px; margin: 0 4px 0 3px; background: #316ac5; color: #fff; font: 10px "Liberation Sans", sans-serif; }
.line { width: 2px; height: 24px; margin-right: 5px; background: #aca899; border-right: 1px solid #fff; }
.lang .i16 { margin-right: 5px; }
.opts { flex-direction: column; gap: 4px; width: 10px; margin-right: 6px; }
.opts svg { width: 10px; height: 9px; }
.tray { width: 144px; border: 1px solid; border-color: #aca899 #fff #fff #aca899; display: flex; align-items: center; padding: 0 28px 0 2px; justify-content: space-between; font-size: 12px; }
.trayicons { display: grid; grid-template-columns: repeat(3, 16px); gap: 3px 2px; }
</style>
